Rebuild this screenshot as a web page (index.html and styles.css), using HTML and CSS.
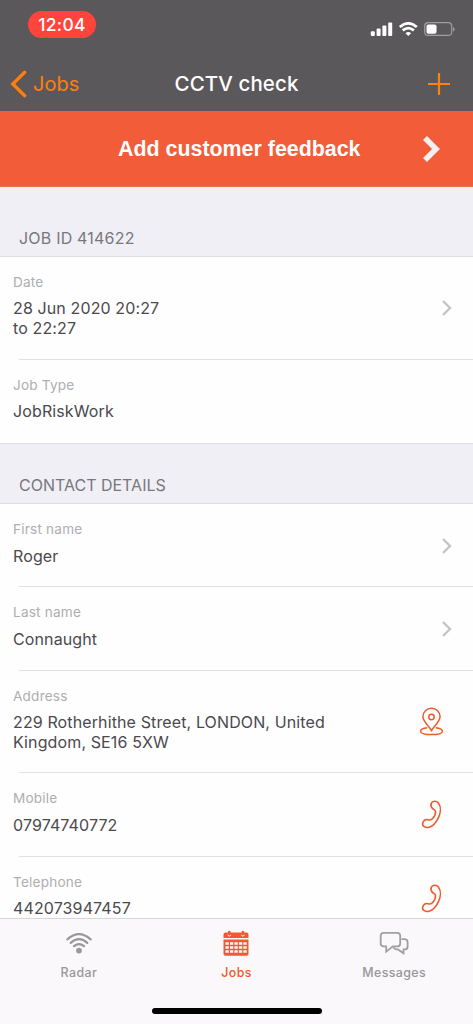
FILE: index.html
```html
<!DOCTYPE html>
<html lang="en">
<head>
<meta charset="utf-8">
<title>CCTV check</title>
<link rel="stylesheet" href="styles.css">
</head>
<body>
<div class="screen">
  <header class="header">
    <div class="status">
      <span class="clock">12:04</span>
      <svg class="signals" width="86" height="16" viewBox="0 0 86 16">
        <g fill="#fff">
          <rect x="0.8" y="9.2" width="4" height="4.8" rx="1"/>
          <rect x="6.6" y="6.5" width="4" height="7.5" rx="1"/>
          <rect x="12.4" y="3.5" width="4" height="10.5" rx="1"/>
          <rect x="18.2" y="0.5" width="4" height="13.5" rx="1"/>
          <path d="M38.3 14 35.5 11.2Q38.3 9 41.1 11.2Z"/>
        </g>
        <g fill="none" stroke="#fff" stroke-width="2.7">
          <path d="M29.8 5Q38.3-2.4 46.8 5"/>
          <path d="M32.7 8.4Q38.3 3.7 43.9 8.4"/>
        </g>
        <rect x="54.7" y="0.7" width="27" height="12.7" rx="3.5" fill="none" stroke="#a09fa0" stroke-width="1.2"/>
        <rect x="56.5" y="2.5" width="10" height="9.2" rx="1.8" fill="#fff"/>
        <path d="M83 5v4.4q1.6-.7 1.6-2.2T83 5Z" fill="#a09fa0"/>
      </svg>
    </div>
    <nav class="nav">
      <a class="back">
        <svg width="18" height="28" viewBox="0 0 18 28"><path d="M14.7 2.3 2.8 14l11.9 11.7" fill="none" stroke="#ff7f0e" stroke-width="3.3" stroke-linecap="round" stroke-linejoin="miter"/></svg>
        <span class="back-text">Jobs</span>
      </a>
      <h1 class="title">CCTV check</h1>
      <svg class="add" width="24" height="24" viewBox="0 0 24 24"><path d="M12 1v22M1 12h22" stroke="#f98212" stroke-width="2.2"/></svg>
    </nav>
  </header>

  <div class="banner">
    <span class="banner-text">Add customer feedback</span>
    <svg class="banner-arrow" width="20" height="28" viewBox="0 0 20 28"><path d="M3 3l11 11L3 25" fill="none" stroke="#f4f0f2" stroke-width="5.6"/></svg>
  </div>

  <main class="content">
    <h2 class="section first"><span class="job-id">JOB ID 414622</span></h2>
    <section class="group">
      <div class="row">
        <div class="field"><span class="label">Date</span><span class="value">28 Jun 2020 20:27<br>to 22:27</span></div>
        <svg class="chevron" width="12" height="18" viewBox="0 0 12 18"><path d="M2 2l7 7-7 7" fill="none" stroke="#c5c4c8" stroke-width="2.4"/></svg>
      </div>
      <div class="row">
        <div class="field"><span class="label">Job Type</span><span class="value">JobRiskWork</span></div>
      </div>
    </section>
    <h2 class="section"><span class="contact">CONTACT DETAILS</span></h2>
    <section class="group">
      <div class="row">
        <div class="field"><span class="label">First name</span><span class="value">Roger</span></div>
        <svg class="chevron" width="12" height="18" viewBox="0 0 12 18"><path d="M2 2l7 7-7 7" fill="none" stroke="#c5c4c8" stroke-width="2.4"/></svg>
      </div>
      <div class="row">
        <div class="field"><span class="label">Last name</span><span class="value">Connaught</span></div>
        <svg class="chevron" width="12" height="18" viewBox="0 0 12 18"><path d="M2 2l7 7-7 7" fill="none" stroke="#c5c4c8" stroke-width="2.4"/></svg>
      </div>
      <div class="row">
        <div class="field"><span class="label">Address</span><span class="value">229 Rotherhithe Street, LONDON, United<br>Kingdom, SE16 5XW</span></div>
        <svg class="action" width="26" height="30" viewBox="0 0 26 30"><g fill="none" stroke="#f0592c" stroke-width="1.5"><path d="M12.5 23.5C10 19.5 3.9 14.3 3.9 9.8a8.6 8.6 0 0 1 17.2 0C21.1 14.3 15 19.5 12.5 23.5Z"/><circle cx="12.5" cy="10" r="2.7"/><path d="M8.3 20.7C4 21.1 1.6 22.6 1.6 24.2c0 2.2 4.8 3.4 10.9 3.4s10.9-1.2 10.9-3.4c0-1.6-2.4-3.1-6.7-3.5"/></g></svg>
      </div>
      <div class="row">
        <div class="field"><span class="label">Mobile</span><span class="value">07974740772</span></div>
        <svg class="action" width="26" height="30" viewBox="0 0 26 30"><path class="phone" d="M12.3 3.4C13.3.8 17.4.4 19.4 3c3 4 2.2 10.5-.3 15.4-1.9 3.8-5.3 8-9.1 8.9-3.3.8-7.3-1.1-6.3-4.3.8-2.8 3.2-4 5.2-3.3 2.1.7 3.5.5 4.8-1.1 2.2-2.7 3.1-4.8 2.8-7.2-.2-1.5-1.7-1.8-2.9-2.8-1.3-1.1-2-3.3-1.3-5.2Z"/></svg>
      </div>
      <div class="row">
        <div class="field"><span class="label">Telephone</span><span class="value">442073947457</span></div>
        <svg class="action" width="26" height="30" viewBox="0 0 26 30"><path class="phone" d="M12.3 3.4C13.3.8 17.4.4 19.4 3c3 4 2.2 10.5-.3 15.4-1.9 3.8-5.3 8-9.1 8.9-3.3.8-7.3-1.1-6.3-4.3.8-2.8 3.2-4 5.2-3.3 2.1.7 3.5.5 4.8-1.1 2.2-2.7 3.1-4.8 2.8-7.2-.2-1.5-1.7-1.8-2.9-2.8-1.3-1.1-2-3.3-1.3-5.2Z"/></svg>
      </div>
    </section>
  </main>

  <footer class="footer">
    <div class="tabs">
      <div class="tab">
        <svg width="30" height="28" viewBox="0 0 30 28"><g fill="none" stroke="#98979a" stroke-width="2.2" stroke-linecap="round"><path d="M3.4 9.4Q15-1 26.6 9.4"/><path d="M6.7 12.9Q15 5.5 23.3 12.9"/><path d="M10 16.2Q15 12 20 16.2"/></g><circle cx="15" cy="20.6" r="2.9" fill="#98979a"/></svg>
        <span class="tab-text">Radar</span>
      </div>
      <div class="tab active">
        <svg width="30" height="28" viewBox="0 0 30 28"><path fill="#f15a31" d="M4.5 2.6H7V1.5q1.3-1.6 2.6 0v1.1h11V1.5q1.3-1.6 2.6 0v1.1h2.3q2 0 2 2V8h-25V4.6q0-2 2-2ZM2.5 9.5h25v14.3q0 2-2 2h-21q-2 0-2-2Z"/><g fill="none" stroke="#faf8fb" stroke-width="1"><path d="M6.6 5q1.6 2.4 3.4 0M20.2 5q1.6 2.4 3.4 0"/></g><path d="M4.5 13.4h21.2M4.5 17.4h21.2M4.5 21.4h21.2" fill="none" stroke="#faf8fb" stroke-width="2.5" stroke-dasharray="3.3 1.18"/></svg>
        <span class="tab-text">Jobs</span>
      </div>
      <div class="tab">
        <svg width="30" height="28" viewBox="0 0 30 28"><g fill="none" stroke="#a09fa2" stroke-width="1.8" stroke-linejoin="miter"><path d="M4.7 2.8h13.5q3 0 3 3v7.6q0 3-3 3h-4.4L7.2 21.6v-5.2H4.7q-3 0-3-3V5.8q0-3 3-3Z"/><path d="M22.5 9.2h2.8q3.3 0 3.3 3v4.2q0 3-3.3 3h-.8v3.8l-5.6-3.8h-1.8l-3-2"/></g></svg>
        <span class="tab-text">Messages</span>
      </div>
    </div>
    <div class="home"></div>
  </footer>
</div>
</body>
</html>
```
FILE: styles.css
```css
* { box-sizing: border-box; }
body { margin: 0; font-family: Inter, "Liberation Sans", sans-serif; }
svg { display: block; flex: none; }
.screen { width: 473px; height: 1024px; overflow: hidden; display: flex; flex-direction: column; background: #fefefe; }
.header { flex: none; height: 111px; background: #5a585a; }
.status { height: 56px; padding: 11px 17px 0 28px; display: flex; justify-content: space-between; }
.clock { width: 68px; height: 27px; border-radius: 14px; background: #ff443c; color: #fff; font-size: 17.5px; font-weight: 500; line-height: 28px; letter-spacing: .3px; text-align: center; }
.signals { margin-top: 11px; }
.nav { height: 55px; padding: 0 22px 0 10px; display: grid; grid-template-columns: 100px 1fr 100px; align-items: center; }
.back { display: flex; align-items: center; gap: 5px; color: #ff7f0e; font-size: 20px; }
.title { margin: 0; padding-left: 12px; padding-bottom: 1px; text-align: center; color: #fff; font-size: 20.5px; font-weight: 500; letter-spacing: .1px; white-space: nowrap; }
.nav .add { justify-self: end; }
.banner { flex: none; height: 76px; padding: 0 31px 0 118px; display: flex; align-items: center; justify-content: space-between; background: #f35c38; color: #fff; border-bottom: 1px solid #df7852; }
.banner-text { padding-top: 1px; font-family: "Liberation Sans", Arial, sans-serif; font-weight: 700; font-size: 21.4px; white-space: nowrap; }
.content { flex: 1; min-height: 0; overflow: hidden; }
.section { margin: 0; height: 61px; padding: 31px 0 0 19px; background: #f0eff5; border-top: 1px solid #e0dfe4; border-bottom: 1px solid #dddce1; color: #78777b; font-size: 16px; font-weight: 400; line-height: 20px; }
.section.first { height: 70px; padding-top: 41px; border-top: 0; }
.job-id { letter-spacing: .2px; }
.row { position: relative; display: flex; align-items: center; justify-content: space-between; padding: 17px 20px 21.3px 13px; }
.row + .row::before { content: ""; position: absolute; top: -1px; left: 19px; right: 0; height: 1px; background: #e1e0e3; }
.field { display: flex; flex-direction: column; gap: 9.2px; }
.label { color: #aeadb1; font-size: 13.6px; line-height: 16.3px; letter-spacing: .2px; }
.value { color: #4b494d; font-size: 16px; line-height: 19.5px; letter-spacing: .12px; white-space: nowrap; }
.row .chevron { margin-top: 4px; }
.row .action { margin: 5px 8px 0 0; }
.phone { fill: none; stroke: #f0592c; stroke-width: 1.6; }
.footer { flex: none; height: 106px; background: #faf8fb; border-top: 1px solid #d6d5d8; }
.tabs { height: 89px; display: grid; grid-template-columns: repeat(3, 1fr); padding-top: 11px; }
.tab { display: flex; flex-direction: column; align-items: center; gap: 5.5px; color: #98979a; }
.tab-text { font-size: 12.4px; line-height: 17px; font-weight: 450; letter-spacing: .4px; }
.active { color: #f0592c; }
.home { width: 170px; height: 6px; margin: 0 auto; border-radius: 3px; background: #000; }
```
